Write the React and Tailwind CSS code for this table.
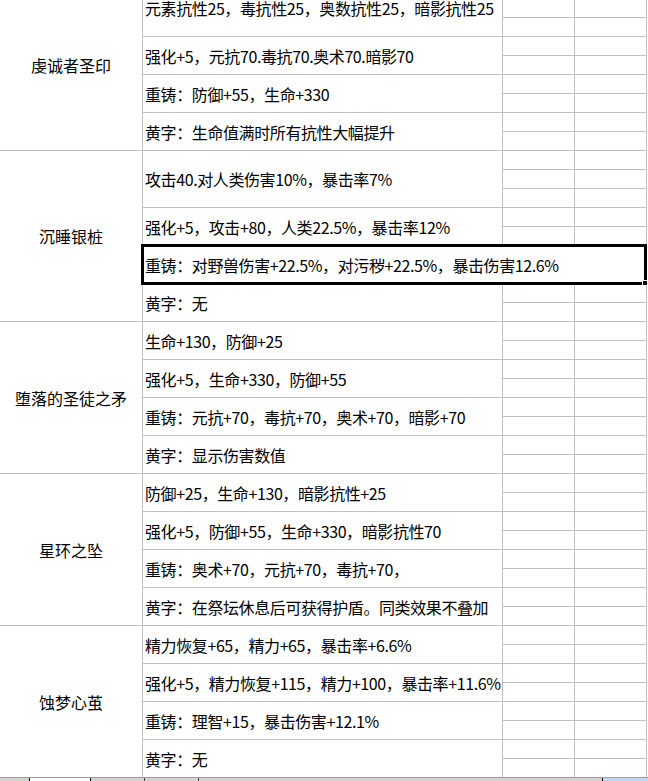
const groups = [
  {
    name: "虔诚者圣印",
    rows: [
      { text: "元素抗性25，毒抗性25，奥数抗性25，暗影抗性25", span: 3 },
      { text: "强化+5，元抗70.毒抗70.奥术70.暗影70", span: 2 },
      { text: "重铸：防御+55，生命+330", span: 2 },
      { text: "黄字：生命值满时所有抗性大幅提升", span: 2 },
    ],
  },
  {
    name: "沉睡银桩",
    rows: [
      { text: "攻击40.对人类伤害10%，暴击率7%", span: 3 },
      { text: "强化+5，攻击+80，人类22.5%，暴击率12%", span: 2 },
      { text: "重铸：对野兽伤害+22.5%，对污秽+22.5%，暴击伤害12.6%", span: 2, merged: true },
      { text: "黄字：无", span: 2 },
    ],
  },
  {
    name: "堕落的圣徒之矛",
    rows: [
      { text: "生命+130，防御+25", span: 2 },
      { text: "强化+5，生命+330，防御+55", span: 2 },
      { text: "重铸：元抗+70，毒抗+70，奥术+70，暗影+70", span: 2 },
      { text: "黄字：显示伤害数值", span: 2 },
    ],
  },
  {
    name: "星环之坠",
    rows: [
      { text: "防御+25，生命+130，暗影抗性+25", span: 2 },
      { text: "强化+5，防御+55，生命+330，暗影抗性70", span: 2 },
      { text: "重铸：奥术+70，元抗+70，毒抗+70，", span: 2 },
      { text: "黄字：在祭坛休息后可获得护盾。同类效果不叠加", span: 2 },
    ],
  },
  {
    name: "蚀梦心茧",
    rows: [
      { text: "精力恢复+65，精力+65，暴击率+6.6%", span: 2 },
      { text: "强化+5，精力恢复+115，精力+100，暴击率+11.6%", span: 2 },
      { text: "重铸：理智+15，暴击伤害+12.1%", span: 2 },
      { text: "黄字：无", span: 2 },
    ],
  },
];

const HEIGHT = { 2: "h-[38px]", 3: "h-[57px]" };

const EmptyCol = ({ span }) => (
  <div className="flex w-[72px] flex-col">
    {Array.from({ length: span }).map((_, i) => (
      <div key={i} className="h-[19px] border-r border-b border-[#c0c0c0]" />
    ))}
  </div>
);

const TextRow = ({ row }) => {
  if (row.merged) {
    return (
      <div className="flex">
        <div
          className={`${HEIGHT[row.span]} flex w-[504px] items-center whitespace-nowrap border-r border-b border-[#c0c0c0] pl-[2px] tracking-[-0.4px]`}
        >
          {row.text}
        </div>
        <div className="w-[2px]" />
      </div>
    );
  }
  return (
    <div className="flex">
      <div
        className={`${HEIGHT[row.span]} flex w-[360px] items-center whitespace-nowrap border-r border-b border-[#c0c0c0] pl-[2px] tracking-[-0.4px]`}
      >
        {row.text}
      </div>
      <EmptyCol span={row.span} />
      <EmptyCol span={row.span} />
      <div className="w-[2px]" />
    </div>
  );
};

export default function App() {
  return (
    <div className="flex h-[781px] w-[648px] flex-col overflow-hidden bg-white font-['Noto_Sans_CJK_SC',sans-serif] text-[16px] leading-none text-black">
      <div className="relative flex-1 overflow-hidden">
        <div className="-mt-[20px]">
          {groups.map((g) => (
            <div key={g.name} className="flex">
              <div className="flex w-[143px] shrink-0 items-center justify-center border-r border-b border-[#c0c0c0]">
                {g.name}
              </div>
              <div className="flex flex-col">
                {g.rows.map((r) => (
                  <TextRow key={r.text} row={r} />
                ))}
              </div>
            </div>
          ))}
        </div>

        {/* active cell selection */}
        <div className="absolute left-[141px] top-[244px] h-[41px] w-[506px] border-[3px] border-black">
          <span className="absolute -right-[4px] -bottom-[4px] h-[6px] w-[6px] border border-white bg-black" />
        </div>
      </div>

      {/* sheet tabs */}
      <div className="flex h-[4px] shrink-0 border-t border-[#a0a0a0] bg-[#d6d3ce]">
        <div className="w-[29px]" />
        <div className="w-[61px] border-l border-black bg-white" />
        <div className="w-[54px] border-l border-black" />
        <div className="w-[54px] border-l border-[#404040]" />
        <div className="flex-1 border-l border-[#404040]" />
        <div className="w-[46px] border-l border-black bg-[#c4d4f4]" />
      </div>
    </div>
  );
}
